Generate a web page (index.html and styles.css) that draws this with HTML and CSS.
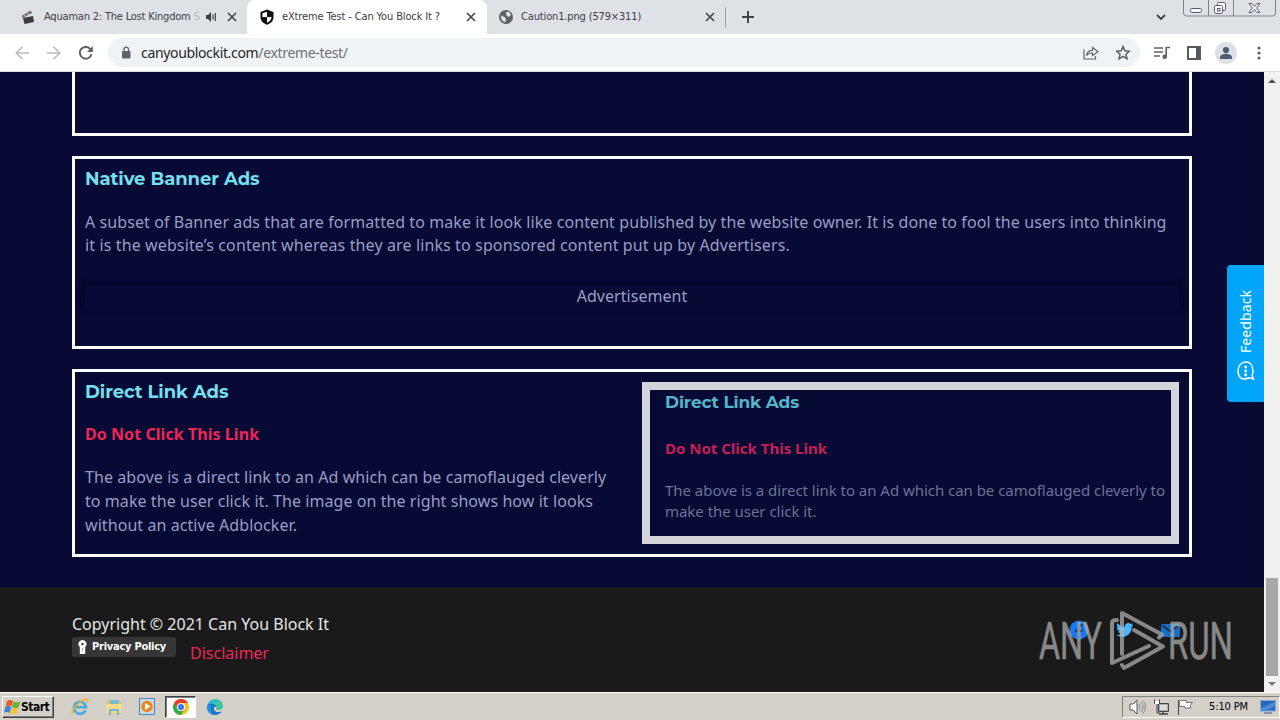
FILE: index.html
```html
<!DOCTYPE html>
<html lang="en">
<head>
<meta charset="utf-8">
<title>eXtreme Test - Can You Block It ?</title>
<link rel="stylesheet" href="styles.css">
</head>
<body>
<div class="screen">
  <header class="tabstrip">
    <div class="tab tab-first">
      <svg class="fav" width="14" height="14" viewBox="0 0 14 14"><path d="M.5 6 9.500.500l1.500 2.500-9 5z" fill="#6b6d70"/><path d="M2 8l10-2 1 6-9.500 2z" fill="#3c3d40"/><path d="M3.500 5l1.500 1.500M6.500 3 8 5" stroke="#dee1e6"/></svg>
      <span class="title title-movie">Aquaman 2: The Lost Kingdom <i>S</i></span>
      <svg class="sound" width="12" height="12" viewBox="0 0 12 12"><path d="M1 4h2l3-3v10L3 8H1z" fill="#3c4043"/><path d="M8 3.500v5M10.300 2v8" stroke="#3c4043" stroke-width="1.200"/></svg>
      <svg class="close" width="10" height="10" viewBox="0 0 10 10"><path d="M1 1l8 8M9 1L1 9"/></svg>
    </div>
    <div class="tab tab-active">
      <svg class="fav" width="16" height="16" viewBox="0 0 16 16"><path d="M8 .5 14.500 3v5c0 4-3 6.500-6.500 7.800C4.500 14.500 1.500 12 1.500 8V3z" fill="#111"/><path d="M8 2.700V8H3.400V4.300zM8 8h4.600c-.2 2.800-2.200 4.700-4.600 5.800z" fill="#fff"/></svg>
      <span class="title title-active">eXtreme Test - Can You Block It ?</span>
      <svg class="close" width="10" height="10" viewBox="0 0 10 10"><path d="M1 1l8 8M9 1L1 9"/></svg>
    </div>
    <div class="tab tab-last">
      <svg class="fav" width="14" height="14" viewBox="0 0 14 14"><circle cx="7" cy="7" r="7" fill="#5f6368"/><path d="M2 5.500 5.500 7l1.500 2 -.5 3C4 12 2 9.500 2 7zM7 2l3-.2 2 3.200-2.500 2-2-1.500z" fill="#dee1e6"/></svg>
      <span class="title title-png">Caution1.png (579×311)</span>
      <svg class="close" width="10" height="10" viewBox="0 0 10 10"><path d="M1 1l8 8M9 1L1 9"/></svg>
    </div>
    <svg class="plus" width="12" height="12" viewBox="0 0 12 12"><path d="M6 0v12M0 6h12" stroke="#3c4043" stroke-width="1.900"/></svg>
    <svg class="chevron" width="10" height="7" viewBox="0 0 10 7"><path d="M1 1l4 4 4-4" fill="none" stroke="#3c4043" stroke-width="1.800"/></svg>
    <svg class="winbtns" width="94" height="18" viewBox="0 0 94 18"><path d="M.5 0v13q0 3 3 3h86q3 0 3-3V0M25.500 0v16M50.500 0v16" fill="none" stroke="#7d828b"/><g fill="#f7f7f7" stroke="#5d6068"><rect x="7.500" y="8.500" width="11" height="4" rx="1"/><rect x="34.500" y="2.500" width="8" height="8" rx="1"/><rect x="31.500" y="5.500" width="8" height="8" rx="1"/><rect x="34.500" y="8.500" width="2.500" height="2.500"/><path d="M66 3.500h3l2.500 3 2.500-3h3L73.500 8l3.500 4.500h-3l-2.500-3-2.500 3h-3L69.500 8z"/></g></svg>
  </header>

  <nav class="toolbar">
    <svg class="back" width="14" height="14" viewBox="0 0 14 14"><path d="M7.500.8 1.200 7l6.300 6.200M1.200 7H14" fill="none" stroke="#b9bbbe" stroke-width="1.600"/></svg>
    <svg class="forward" width="14" height="14" viewBox="0 0 14 14"><path d="M6.500.8 12.800 7l-6.300 6.200M12.800 7H0" fill="none" stroke="#b9bbbe" stroke-width="1.600"/></svg>
    <svg class="reload" width="14" height="14" viewBox="0 0 14 14"><path d="M12.500 8.200A5.900 5.900 0 1 1 11 2.700L13 4.700" fill="none" stroke="#5f6368" stroke-width="2"/><path d="M13.900 0v6H8z" fill="#5f6368"/></svg>
    <div class="omnibox">
      <svg class="lock" width="10" height="13" viewBox="0 0 10 13"><rect x="1" y="5" width="8.500" height="7.500" rx="1" fill="#5f6368"/><path d="M3 5V3.300a2.200 2.200 0 0 1 4.500 0V5" fill="none" stroke="#5f6368" stroke-width="1.300"/></svg>
      <span class="url"><b>canyoublockit.com</b>/extreme-test/</span>
      <svg class="share" width="16" height="14" viewBox="0 0 16 14"><path d="M1 3.500v9.500h11.500v-3M3.500 9.500C4 6 6 4.300 9.500 4.300V1.500L15 5.800 9.500 9.700V7C7 7 5 7.500 3.500 9.500z" fill="none" stroke="#5f6368" stroke-width="1.200"/></svg>
      <svg class="star" width="16" height="15" viewBox="0 0 16 15"><path d="m8 1.500 1.800 4.300 4.700.4-3.600 3 1.100 4.600L8 11.300l-4 2.500 1.100-4.600-3.600-3 4.700-.4z" fill="none" stroke="#55595e" stroke-width="1.400"/></svg>
    </div>
    <svg class="queue" width="16" height="14" viewBox="0 0 16 14"><path d="M0 2h9M0 6h9M0 10h6M12.200 11V1.500H16" fill="none" stroke="#5f6368" stroke-width="1.700"/><circle cx="10.700" cy="10.800" r="2.300" fill="#5f6368"/></svg>
    <svg class="panel" width="14" height="14" viewBox="0 0 14 14"><path d="M1 1h12v12H1z" fill="none" stroke="#55585c" stroke-width="1.900"/><path d="M9 1h4v12H9z" fill="#55585c"/></svg>
    <svg class="avatar" width="22" height="22" viewBox="0 0 22 22"><circle cx="11" cy="11" r="11" fill="#dce1e8"/><circle cx="11" cy="8" r="3.100" fill="#4e5b73"/><path d="M5 17v-1.500c0-3 4-3.700 6-3.700s6 .7 6 3.700V17z" fill="#4e5b73"/></svg>
    <svg class="dots" width="4" height="14" viewBox="0 0 4 14"><g fill="#5f6368"><circle cx="2" cy="2" r="1.600"/><circle cx="2" cy="7" r="1.600"/><circle cx="2" cy="12" r="1.600"/></g></svg>
  </nav>

  <div class="viewport">
    <main class="page">
      <section class="card card-top"></section>
      <section class="card card-native">
        <h2 class="heading">Native Banner Ads</h2>
        <p class="copy copy-native"><span class="l1">A subset of Banner ads that are formatted to make it look like content published by the website owner. It is done to fool the users into thinking</span><br><span class="l2">it is the website’s content whereas they are links to sponsored content put up by Advertisers.</span></p>
        <div class="advert">Advertisement</div>
      </section>
      <section class="card card-direct">
        <div class="direct-text">
          <h2 class="heading">Direct Link Ads</h2>
          <a class="danger">Do Not Click This Link</a>
          <p class="copy copy-direct">The above is a direct link to an Ad which can be camoflauged cleverly<br>to make the user click it. The image on the right shows how it looks<br>without an active Adblocker.</p>
        </div>
        <div class="sample">
          <h3 class="sample-title">Direct Link Ads</h3>
          <div class="sample-link">Do Not Click This Link</div>
          <p class="sample-copy">The above is a direct link to an Ad which can be camoflauged cleverly to<br>make the user click it.</p>
        </div>
      </section>
      <footer class="footer">
        <div class="legal">
          <div class="copyright">Copyright © 2021 Can You Block It</div>
          <div class="links">
            <span class="privacy"><svg width="9" height="14" viewBox="0 0 9 14"><path d="M4.500 0a4 4 0 0 1 2.700 7V14H1.800V7A4 4 0 0 1 4.500 0z" fill="#fff"/><circle cx="4.500" cy="4" r="1.200" fill="#333"/><path d="M4.500 8v3" stroke="#aaa"/></svg><span>Privacy Policy</span></span>
            <span class="disclaimer">Disclaimer</span>
          </div>
        </div>
        <div class="social">
          <svg width="20" height="20" viewBox="0 0 20 20"><circle cx="10" cy="10" r="9.500" fill="#1877f2"/><path d="M8.500 19v-7H6V9.500h2.500V7.700c0-2.500 1.400-3.700 3.500-3.700l1.800.2v2.200h-1.200c-1.100 0-1.400.6-1.400 1.400v1.700h2.500l-.4 2.500h-2.100v7z" fill="#203b65"/></svg>
          <svg width="18" height="16" viewBox="0 0 18 16"><path d="M17.500 2.500q-1 .6-2 .6 1-.7 1.500-1.800-1 .6-2.200.8c-2.600-2.600-6.500-.2-5.900 2.800Q4.600 4.700 1.500 1.200C.3 3 .8 5 2.500 6q-.8 0-1.600-.4c0 1.800 1.200 3.200 2.900 3.500q-.8.2-1.600.1c.5 1.400 1.800 2.300 3.300 2.400Q3.300 13.400.3 13c7 4.300 15.500.2 15.400-8z" fill="#4bb5ff"/></svg>
          <svg width="19" height="13" viewBox="0 0 19 13"><rect width="19" height="13" rx="1.500" fill="#176ec4"/><path d="m1.500 1.500 8 6 8-6" fill="none" stroke="#1d2e4a" stroke-width="2"/></svg>
        </div>
        <svg class="watermark" width="200" height="68" viewBox="0 0 200 68"><g fill="#b3b3b3" stroke="#b3b3b3" stroke-width=".6" font-family="Roboto" font-size="51"><text x="2" y="51" textLength="63" lengthAdjust="spacingAndGlyphs">ANY</text><text x="131" y="51" textLength="65" lengthAdjust="spacingAndGlyphs">RUN</text></g><path d="M80 12q-5 0-5 3v40l37-17M85 46V5l40 21.500-3 3M97 22l29 16.500L87 60l-2-3" fill="none" stroke="#b3b3b3" stroke-width="4" stroke-linejoin="round" stroke-linecap="round"/></svg>
      </footer>
      <aside class="feedback"><span>Feedback</span><svg width="18" height="20" viewBox="0 0 18 20"><path d="M16.500 18 12 16.800C4 20.500 1 15 1 10S4 1 9 1s7 4.500 7 9c0 2-.5 3.500-1 4.500z" fill="none" stroke="#fff" stroke-width="1.500"/><g fill="#fff"><circle cx="8.700" cy="6" r="1.400"/><circle cx="8.700" cy="10" r="1.400"/><circle cx="8.700" cy="14" r="1.400"/></g></svg></aside>
    </main>
    <div class="scrollbar"><i class="arrow-up"></i><div class="thumb"></div><i class="arrow-down"></i></div>
  </div>

  <div class="taskbar">
    <div class="start"><svg width="17" height="16" viewBox="0 0 17 16"><path d="M3 2q3-2 6 0L7.500 7.500q-3-2-6 0z" fill="#e35b2b"/><path d="M9.500 2.500q3 1.500 7 0L14.500 8.500q-3 1.500-6.500 0z" fill="#72af38"/><path d="M1.200 8q3-2 6 0l-1.500 6q-3-2-5.500 0z" fill="#3a83ce"/><path d="M7.700 9q3 1.500 6.500 0l-1.600 5.500q-3 1.500-6.400 0z" fill="#f4c431"/></svg><b>Start</b></div>
    <div class="task t-ie"><svg width="18" height="18" viewBox="0 0 18 18"><path d="M14.500 12.300A6 6 0 1 1 15 9.300H5" fill="none" stroke="#4ba9dc" stroke-width="2.600"/><path d="M1.500 16.500C-1 13 11-.5 16.500 1.500q1 1-.5 3.500" fill="none" stroke="#e8b62b" stroke-width="1.500"/></svg></div>
    <div class="task t-folder"><svg width="18" height="18" viewBox="0 0 18 18"><path d="M2 2h5l1.500 2H16v12H2z" fill="#e6c468"/><path d="M5 2h9v5H5z" fill="#75bdd4"/><path d="M1 6h16l-1 9H2z" fill="#f3dc8a"/><path d="M5 17v-5h8v5" fill="none" stroke="#6db4d8" stroke-width="2"/></svg></div>
    <div class="task t-media"><svg width="16" height="17" viewBox="0 0 16 17"><rect x=".5" y=".5" width="15" height="16" fill="#c4dcf0" stroke="#4d88bf"/><circle cx="8" cy="8.500" r="5.700" fill="#f38518"/><path d="m6 5 5.500 3.500L6 12z" fill="#fff"/></svg></div>
    <div class="task-active"><svg width="16" height="16" viewBox="0 0 16 16"><circle cx="8" cy="8" r="8" fill="#fbc116"/><path d="M1.100 4A8 8 0 0 1 15 4H8a4 4 0 0 0-3.500 6z" fill="#e33b2e"/><path d="M1.100 4A8 8 0 0 0 8 16l3.500-6A4 4 0 0 1 4.500 10z" fill="#2da94f"/><circle cx="8" cy="8" r="4" fill="#fff"/><circle cx="8" cy="8" r="3.100" fill="#397be8"/></svg></div>
    <div class="task t-edge"><svg width="16" height="16" viewBox="0 0 16 16"><path d="M.2 7C1 2 5 0 8 0c5 0 8 3.500 8 7 0 3-2.500 4-4.500 4-2 0-3-.8-2.300-2C9 5 3 3.500.2 7z" fill="#3fc6a0"/><path d="M.2 7C1 3 5 1 8 1c3 0 4 1 5 2-4-1-7 0-8 3z" fill="#2cb5dc"/><path d="M0 8c0-4 8-5 9.200 0C6 7 6 12 10 13c2 .5 4-.3 5-1-1.500 3-4.500 4-7 4-5 0-8-4-8-8z" fill="#1976c9"/><path d="M5 7c-2 3-1 7 3 9-5 0-8-4-8-8 1-2 3-2 5-1z" fill="#1d93dc"/></svg></div>
    <div class="tray">
      <svg width="17" height="16" viewBox="0 0 17 16"><path d="M1 5h3l4-4v14l-4-4H1z" fill="#fff" stroke="#555"/><path d="M10 5q2 3 0 6M12 3q4 5 0 10M14 1.500q5 6.500 0 13" fill="none" stroke="#888"/></svg>
      <svg width="17" height="16" viewBox="0 0 17 16"><path d="M5.500 4.500h10v8h-10z" fill="#aaa" stroke="#444"/><path d="M7 6h7v5H7z" fill="#ddd"/><path d="M6 15h9M10 13v2" stroke="#444" stroke-width="1.500"/><path d="M1.500.5v4h5v-4M4 4v10h3" fill="none" stroke="#444"/><path d="M2 2h4v3H2z" fill="#fff"/></svg>
      <svg width="17" height="16" viewBox="0 0 17 16"><path d="M1.500 1v15" stroke="#555" stroke-width="1.200"/><path d="M2.500 1.500h7v2h6l-2.500 3 1 2.500H8V7.500H2.500z" fill="#fff" stroke="#777"/></svg>
      <span class="clock">5:10 PM</span>
      <svg width="16" height="14" viewBox="0 0 16 14"><rect x=".5" y=".5" width="15" height="10.500" fill="#2867bd" stroke="#83a8d8"/><path d="M1 8 15 2v4L5 11H1z" fill="#4b8bdb"/><path d="M4 13h8" stroke="#345d93"/></svg>
    </div>
  </div>
</div>
</body>
</html>
```
FILE: styles.css
```css
* { box-sizing: border-box; }
body { margin: 0; font-family: "Noto Sans", "Liberation Sans", sans-serif; }
h2, h3, p { margin: 0; }
svg { display: block; flex: none; }
.screen { width: 1280px; height: 720px; display: flex; flex-direction: column; overflow: hidden; }

.tabstrip { height: 34px; flex: none; display: flex; background: #dee1e6; }
.tab { display: flex; align-items: center; height: 34px; flex: none; white-space: nowrap; }
.title { font: 11px/16px "DejaVu Sans Condensed", "DejaVu Sans", sans-serif; color: #3c4043; flex: none; }
.title i { font-style: normal; color: #b9bcc1; }
.tab-first { width: 247px; padding-left: 21px; }
.title-movie { margin-left: 9px; width: 160px; letter-spacing: -.2px; }
.sound { margin-left: 1px; }
.tab-first .close { margin-left: 10px; }
.tab-active { width: 240px; padding-left: 12px; background: #fff; border-radius: 8px 8px 0 0; }
.title-active { margin-left: 7px; width: 184px; letter-spacing: -.13px; }
.tab-last { width: 239px; padding-left: 12px; border-right: 1px solid #9a9da2; height: 20px; margin-top: 7px; }
.title-png { margin-left: 8px; width: 184px; letter-spacing: -.15px; }
.close { stroke: #46494d; stroke-width: 1.7; }
.plus { margin: 11px 0 0 16px; }
.chevron { margin: 14px 0 0 auto; }
.winbtns { margin: 0 3px 0 17px; }

.toolbar { height: 38px; flex: none; display: flex; align-items: center; background: #fff; border-bottom: 1px solid #d9dce0; padding: 0 19px 0 15px; }
.forward { margin-left: 18px; }
.reload { margin-left: 18px; }
.omnibox { width: 1032px; height: 29px; margin-left: 15px; border-radius: 15px; background: #f0f3f5; display: flex; align-items: center; padding: 0 9px 0 13px; }
.url { font: 14px/20px "Noto Sans", sans-serif; color: #6c7075; margin-left: 10px; letter-spacing: -.34px; white-space: nowrap; }
.url b { font-weight: 400; color: #25272b; }
.share { margin-left: auto; }
.star { margin-left: 16px; }
.queue { margin-left: 14px; }
.panel { margin-left: 17px; }
.avatar { margin-left: 14px; }
.dots { margin-left: auto; }

.viewport { height: 620px; flex: none; display: flex; }
.page { width: 1264px; background: #060a34; position: relative; overflow: hidden; }
.card { width: 1120px; margin: 0 auto 20px 72px; border: 3px solid #fff; padding: 8px 10px; }
.card-top { height: 64px; border-top: 0; }
.card-native { height: 193px; }
.heading { font: 700 18px/24px "Montserrat", "Noto Sans", sans-serif; letter-spacing: -.06px; color: #75dfec; white-space: nowrap; }
.copy { color: #9b9dc5; font-size: 16px; line-height: 24px; white-space: nowrap; }
.copy-native { margin-top: 20px; line-height: 23px; }
.l1 { letter-spacing: .087px; }
.l2 { letter-spacing: .12px; }
.advert { margin-top: 28px; height: 24px; line-height: 23px; text-align: center; color: #9b9dc5; font-size: 16px; box-shadow: 0 0 5px 1px #050829; letter-spacing: .05px; }
.card-direct { height: 188px; display: flex; justify-content: space-between; margin-bottom: 30px; }
.danger { display: block; font-weight: 700; font-size: 16px; line-height: 24px; color: #ef2558; margin-top: 18px; letter-spacing: .06px; }
.copy-direct { margin-top: 19px; letter-spacing: .07px; }
.sample { width: 537px; height: 162px; margin-top: 2px; border: 8px solid #d3d5da; color: #6e7198; padding: 0 0 0 15px; white-space: nowrap; }
.sample-title { font: 700 17px/24px "Montserrat", "Noto Sans", sans-serif; letter-spacing: -.15px; color: #55b5c8; }
.sample-link { margin-top: 22px; font: 700 15px/24px "Noto Sans", sans-serif; color: #c71f55; }
.sample-copy { margin-top: 20px; font-size: 15px; line-height: 21px; letter-spacing: -.035px; }

.footer { height: 105px; background: #1a1a1a; padding: 25px 84px 0 72px; position: relative; display: flex; justify-content: space-between; }
.copyright { color: #e5e5e5; font-size: 16px; line-height: 24px; white-space: nowrap; }
.links { display: flex; margin-top: 1px; }
.privacy { width: 104px; height: 20px; border-radius: 3px; background: #363636; color: #fff; display: flex; align-items: center; gap: 5px; padding-left: 6px; font: 700 11px/16px "DejaVu Sans Condensed", "DejaVu Sans", sans-serif; letter-spacing: -.25px; white-space: nowrap; }
.disclaimer { color: #ef2558; font-size: 16px; line-height: 24px; margin: 4px 0 0 14px; }
.social { display: flex; align-items: center; height: 20px; margin-top: 8px; gap: 27px; }
.watermark { position: absolute; left: 1037px; top: 21px; opacity: .72; }
.feedback { position: absolute; left: 1227px; top: 193px; width: 37px; height: 137px; background: #00a5fa; border-radius: 4px 0 0 4px; color: #fff; display: flex; flex-direction: column; align-items: center; padding: 23px 0 0 1px; gap: 8px; }
.feedback span { writing-mode: vertical-rl; transform: rotate(180deg); font-size: 14px; line-height: 20px; height: 65px; letter-spacing: .1px; }

.scrollbar { width: 16px; background: #f1f1f1; display: flex; flex-direction: column; align-items: center; }
.arrow-up, .arrow-down { border: 4px solid transparent; }
.arrow-up { border-top: 0; border-bottom-color: #505050; margin-top: 7px; }
.thumb { width: 12px; height: 98px; background: #a8a8a8; margin-top: 495px; }
.arrow-down { border-bottom: 0; border-top-color: #777; margin-top: 6px; }

.taskbar { height: 28px; flex: none; background: #d4d0c8; border-top: 1px solid #fff; display: flex; align-items: center; padding-left: 2px; }
.start { width: 52px; height: 22px; border: 1px solid; border-color: #fff #404040 #404040 #fff; box-shadow: inset -1px -1px #808080; display: flex; align-items: center; padding-left: 1px; font: 12px/16px "DejaVu Sans Condensed", "DejaVu Sans", sans-serif; letter-spacing: -.5px; }
.t-ie { margin-left: 17px; }
.t-folder { margin-left: 16px; }
.t-media { margin-left: 16px; }
.task-active { width: 31px; height: 22px; margin-left: 10px; background: #fff; border: 1px solid; border-color: #404040 #fff #fff #404040; box-shadow: inset 1px 1px #808080; display: grid; place-items: center; }
.t-edge { margin-left: 11px; }
.tray { width: 158px; height: 22px; margin: 0 0 0 auto; border: 1px solid; border-color: #808080 #fff #fff #808080; display: flex; align-items: center; gap: 7px; padding-left: 6px; }
.clock { font: 11px/16px "DejaVu Sans Condensed", "DejaVu Sans", sans-serif; letter-spacing: -.12px; width: 46px; margin-left: 8px; margin-right: -2px; white-space: nowrap; }
```
